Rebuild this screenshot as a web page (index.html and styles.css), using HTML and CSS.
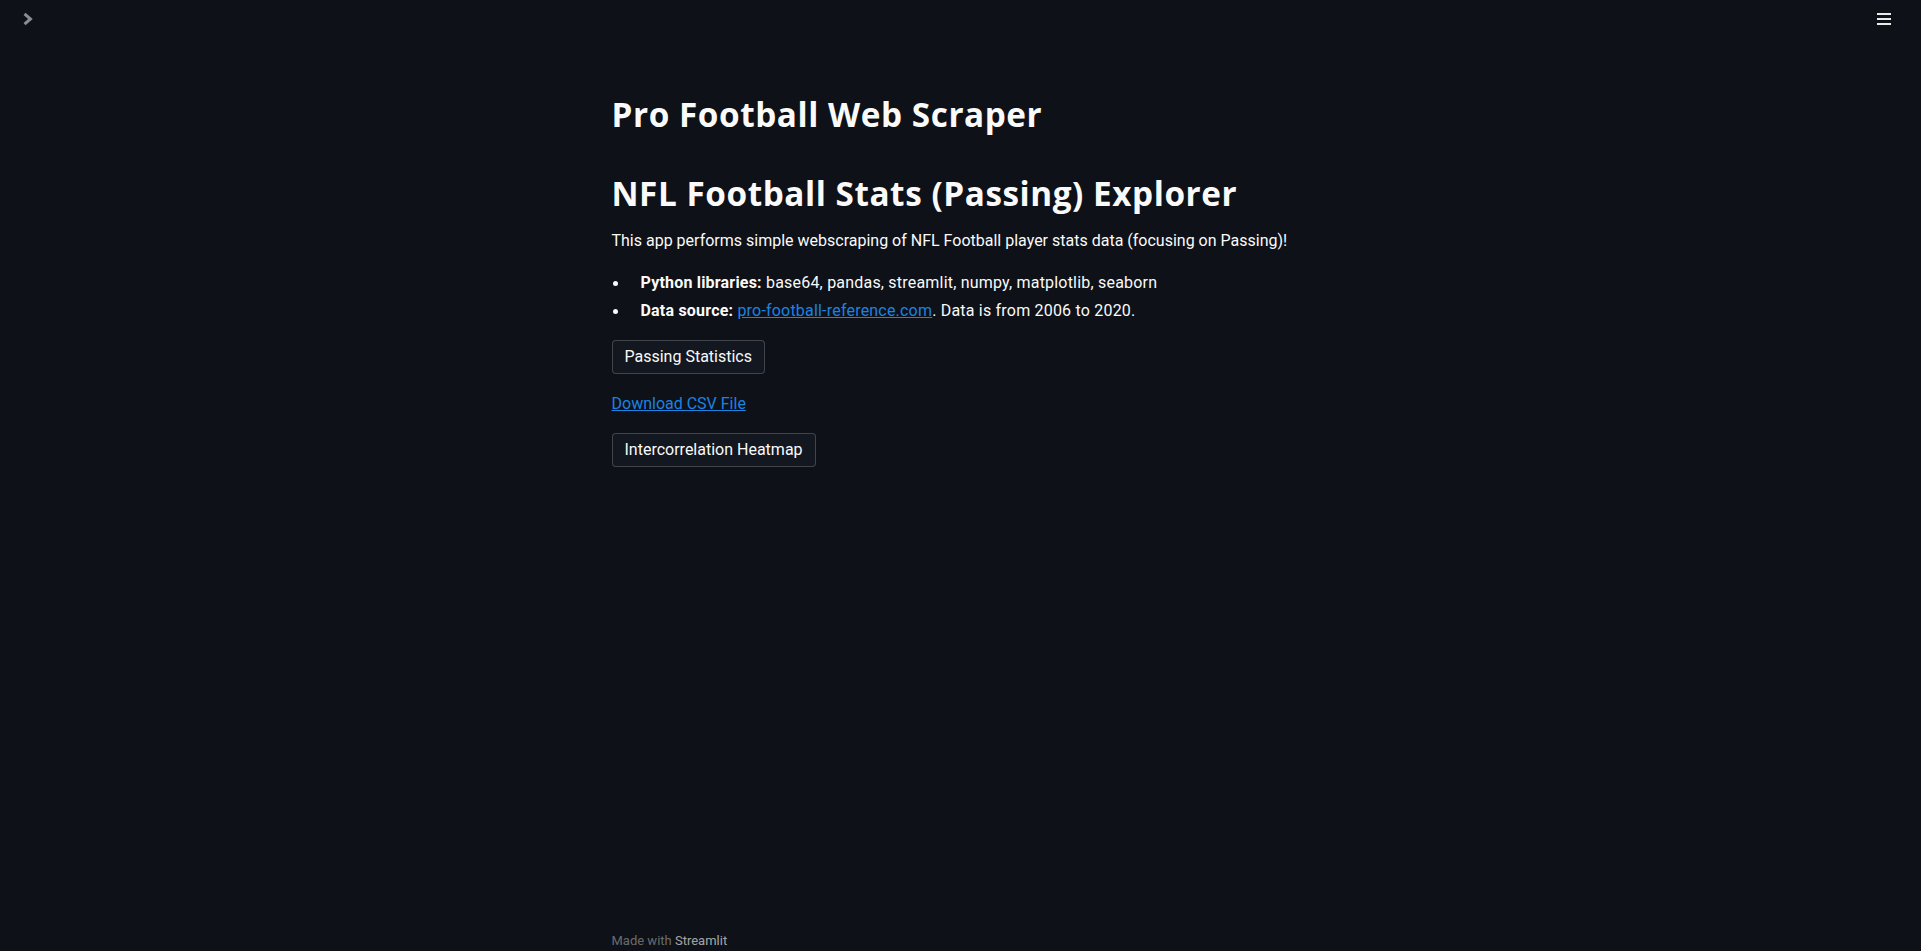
FILE: index.html
```html
<!DOCTYPE html>
<html lang="en">
<head>
<meta charset="utf-8">
<title>Pro Football Web Scraper</title>
<link rel="stylesheet" href="styles.css">
</head>
<body>
<div class="app">
  <button class="sidebar-toggle" aria-label="Open sidebar">
    <svg width="16" height="16" viewBox="0 0 16 16"><polyline points="4.5,1.8 10.5,7 4.5,12.2" fill="none" stroke="currentColor" stroke-width="3" stroke-linejoin="miter"/></svg>
  </button>
  <button class="menu-toggle" aria-label="Main menu">
    <svg width="16" height="14" viewBox="0 0 16 14"><rect x="1" y="1" width="14" height="2"/><rect x="1" y="6" width="14" height="2"/><rect x="1" y="11" width="14" height="2"/></svg>
  </button>
  <main class="main">
    <div class="block">
      <h1 class="title">Pro Football Web Scraper</h1>
      <h1 class="heading">NFL Football Stats (Passing) Explorer</h1>
      <p class="intro">This app performs simple webscraping of NFL Football player stats data (focusing on Passing)!</p>
      <ul class="facts">
        <li><span><strong>Python libraries:</strong> base64, pandas, streamlit, numpy, matplotlib, seaborn</span></li>
        <li><span><strong>Data source:</strong> <a href="#">pro-football-reference.com</a>. Data is from 2006 to 2020.</span></li>
      </ul>
      <div class="row"><button class="btn">Passing Statistics</button></div>
      <div class="row"><a class="download" href="#">Download CSV File</a></div>
      <div class="row"><button class="btn">Intercorrelation Heatmap</button></div>
    </div>
  </main>
  <footer class="footer">
    <div class="footer-inner">Made with <span class="brand">Streamlit</span></div>
  </footer>
</div>
</body>
</html>
```
FILE: styles.css
```css
html, body {
  margin: 0;
  padding: 0;
  background: #0e1117;
}
body {
  font-family: Roboto, "Liberation Sans", sans-serif;
  color: #fafafa;
  font-size: 16px;
}
.app {
  position: relative;
  min-height: 951px;
  height: 100vh;
  display: flex;
  flex-direction: column;
  overflow: hidden;
}
.sidebar-toggle {
  position: absolute;
  left: 20px;
  top: 12px;
  padding: 0;
  border: 0;
  background: none;
  color: #8a8c91;
  display: flex;
}
.menu-toggle {
  position: absolute;
  left: 1876px;
  top: 12px;
  padding: 0;
  border: 0;
  background: none;
  display: flex;
}
.menu-toggle svg { fill: #eaeaea; }
.main {
  flex: 1;
}
.block {
  max-width: 698px;
  margin: 0 auto;
  padding: 94.5px 0 0;
}
.title, .heading {
  margin: 0;
  font-family: "Open Sans", Roboto, sans-serif;
  font-size: 33.3px;
  font-weight: 700;
  line-height: 39.6px;
  letter-spacing: 0.55px;
}
.heading {
  margin-top: 39.5px;
}
.intro {
  margin: 14.9px 0 16.2px;
  line-height: 25.6px;
}
.facts {
  list-style: none;
  margin: 0 0 16.5px;
  padding: 0;
  display: flex;
  flex-direction: column;
  gap: 2.3px;
  letter-spacing: 0.2px;
}
.facts li {
  display: grid;
  grid-template-columns: 29px 1fr;
  line-height: 25.6px;
}
.facts li::before {
  content: "";
  width: 5px;
  height: 5px;
  border-radius: 50%;
  background: #fafafa;
  margin: 11px 0 0 1.5px;
}
.facts strong { font-weight: 700; }
a {
  color: #1c83e1;
  text-decoration: underline;
}
.row {
  margin-bottom: 16.8px;
  line-height: 25.6px;
}
.btn {
  font: inherit;
  color: #fafafa;
  background: #131720;
  border: 1px solid rgba(250, 250, 250, 0.2);
  border-radius: 4px;
  padding: 4px 12px;
  line-height: 24px;
  display: block;
}
.footer {
  max-width: 698px;
  width: 698px;
  margin: 0 auto;
}
.footer-inner {
  font-size: 13px;
  line-height: 20px;
  color: rgba(250, 250, 250, 0.4);
}
.brand { color: rgba(250, 250, 250, 0.65); }
```
